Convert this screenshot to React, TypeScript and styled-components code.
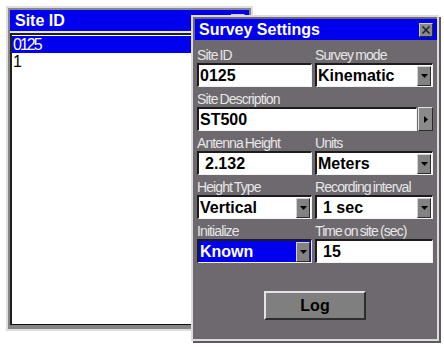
import styled, { createGlobalStyle } from "styled-components";

const GlobalStyle = createGlobalStyle`
  html, body {
    margin: 0;
    padding: 0;
    background: #ffffff;
  }
  * {
    box-sizing: border-box;
  }
`;

const Desktop = styled.div`
  position: relative;
  width: 444px;
  height: 349px;
  overflow: hidden;
  background: #ffffff;
  font-family: "Liberation Sans", Arial, sans-serif;
`;

// back window: the site list
const ListWindow = styled.div`
  position: absolute;
  left: 6px;
  top: 6px;
  width: 247px;
  height: 325px;
  display: flex;
  flex-direction: column;
  border: 2px solid #dedede;
  padding: 2px;
  background: #868686;
`;

const TitleBar = styled.div`
  height: 21px;
  flex: none;
  display: flex;
  align-items: center;
  justify-content: space-between;
  padding: 0 4px 0 4px;
  background: #0000ee;
  color: #ffffff;
  font-weight: bold;
  font-size: 16px;
`;

const ListTitleBar = styled(TitleBar)`
  height: 23px;
  border-bottom: 2px solid #e6e6e6;
  padding-left: 5px;
`;

const CloseBox = styled.div`
  width: 14px;
  height: 14px;
  display: flex;
  align-items: center;
  justify-content: center;
  background: #8a8a8a;
  border: 1px solid;
  border-color: #d0d0d0 #2a2a2a #2a2a2a #d0d0d0;
`;

const List = styled.div`
  flex: 1;
  background: #ffffff;
  border-style: solid;
  border-width: 2px 1px 1px 2px;
  border-color: #1e1e1e #303030 #101010 #1e1e1e;
  margin-bottom: 2px;
  padding-top: 1px;
`;

const ListRow = styled.div<{ $selected?: boolean }>`
  height: 17px;
  line-height: 17px;
  padding-left: 1px;
  font-size: 16px;
  letter-spacing: -2px;
  color: ${(p) => (p.$selected ? "#ffffff" : "#000000")};
  background: ${(p) => (p.$selected ? "#0000ee" : "transparent")};
`;

// front window: the settings dialog
const Dialog = styled.div`
  position: absolute;
  left: 191px;
  top: 15px;
  width: 248px;
  height: 326px;
  display: flex;
  flex-direction: column;
  border: 2px solid #dcdcdc;
  box-shadow: 2px 2px 0 #5c5c5c;
  background: #6d696e;
`;

const DialogTitle = styled(TitleBar)`
  margin: 2px 0 0 2px;
  padding: 0 4px 0 4px;
`;

const Form = styled.div`
  display: grid;
  grid-template-columns: 115px 118px;
  column-gap: 3px;
  row-gap: 4px;
  padding: 7px 0 0 4px;
`;

const Cell = styled.div<{ $wide?: boolean }>`
  display: flex;
  flex-direction: column;
  grid-column: ${(p) => (p.$wide ? "1 / span 2" : "auto")};
`;

const Label = styled.div`
  height: 16px;
  line-height: 16px;
  font-size: 14px;
  letter-spacing: -0.9px;
  word-spacing: -1px;
  color: #e6e6e6;
  white-space: nowrap;
`;

const Control = styled.div<{ $active?: boolean }>`
  height: 24px;
  display: flex;
  align-items: center;
  border-style: solid;
  border-width: 2px 1px 1px 2px;
  border-color: #1c1c1c #f2f2f2 #f2f2f2 #1c1c1c;
  background: ${(p) => (p.$active ? "#0000ee" : "#ffffff")};
  color: ${(p) => (p.$active ? "#ffffff" : "#000000")};
`;

const Value = styled.div<{ $indent?: number }>`
  flex: 1;
  padding-left: ${(p) => p.$indent ?? 1}px;
  font-size: 16px;
  font-weight: bold;
  white-space: nowrap;
  overflow: hidden;
`;

const DropButton = styled.div`
  width: 14px;
  height: 20px;
  margin-right: 1px;
  display: flex;
  align-items: center;
  justify-content: center;
  background: #828282;
  border: 1px solid;
  border-color: #d2d2d2 #2c2c2c #2c2c2c #d2d2d2;
`;

const WideRow = styled.div`
  display: flex;
  gap: 1px;
`;

const SideButton = styled.div`
  width: 15px;
  height: 24px;
  display: flex;
  align-items: center;
  justify-content: center;
  background: #8a8a8a;
  border: 1px solid;
  border-color: #e0e0e0 #2c2c2c #2c2c2c #e0e0e0;
`;

const ButtonRow = styled.div`
  display: flex;
  justify-content: center;
  padding-top: 28px;
`;

const LogButton = styled.div`
  width: 102px;
  height: 29px;
  display: flex;
  align-items: center;
  justify-content: center;
  background: #7f7f7f;
  border: 2px solid;
  border-color: #e4e4e4 #2e2e2e #2e2e2e #e4e4e4;
  font-size: 16px;
  font-weight: bold;
  color: #000000;
`;

const DownArrow = () => (
  <svg width="7" height="4" viewBox="0 0 7 4">
    <path d="M0 0 H7 L3.5 4 Z" fill="#000" />
  </svg>
);

const RightArrow = () => (
  <svg width="4" height="7" viewBox="0 0 4 7">
    <path d="M0 0 V7 L4 3.5 Z" fill="#000" />
  </svg>
);

const CloseX = () => (
  <svg width="10" height="10" viewBox="0 0 10 10">
    <path d="M1.5 1.5 L8.5 8.5 M8.5 1.5 L1.5 8.5" stroke="#222" strokeWidth="1.6" />
  </svg>
);

const Select = ({ value, active, indent }: { value: string; active?: boolean; indent?: number }) => (
  <Control $active={active}>
    <Value $indent={indent}>{value}</Value>
    <DropButton>
      <DownArrow />
    </DropButton>
  </Control>
);

const Input = ({ value, indent }: { value: string; indent?: number }) => (
  <Control>
    <Value $indent={indent}>{value}</Value>
  </Control>
);

export default function App() {
  return (
    <Desktop>
      <GlobalStyle />
      <ListWindow>
        <ListTitleBar>
          <span>Site ID</span>
          <CloseBox>
            <CloseX />
          </CloseBox>
        </ListTitleBar>
        <List>
          <ListRow $selected>0125</ListRow>
          <ListRow>1</ListRow>
        </List>
      </ListWindow>

      <Dialog>
        <DialogTitle>
          <span>Survey Settings</span>
          <CloseBox>
            <CloseX />
          </CloseBox>
        </DialogTitle>
        <Form>
          <Cell>
            <Label>Site ID</Label>
            <Input value="0125" />
          </Cell>
          <Cell>
            <Label>Survey mode</Label>
            <Select value="Kinematic" />
          </Cell>
          <Cell $wide>
            <Label>Site Description</Label>
            <WideRow>
              <div style={{ flex: 1 }}>
                <Input value="ST500" />
              </div>
              <SideButton>
                <RightArrow />
              </SideButton>
            </WideRow>
          </Cell>
          <Cell>
            <Label>Antenna Height</Label>
            <Input value="2.132" indent={6} />
          </Cell>
          <Cell>
            <Label>Units</Label>
            <Select value="Meters" />
          </Cell>
          <Cell>
            <Label>Height Type</Label>
            <Select value="Vertical" />
          </Cell>
          <Cell>
            <Label>Recording interval</Label>
            <Select value="1 sec" indent={6} />
          </Cell>
          <Cell>
            <Label>Initialize</Label>
            <Select value="Known" active />
          </Cell>
          <Cell>
            <Label>Time on site (sec)</Label>
            <Input value="15" indent={6} />
          </Cell>
        </Form>
        <ButtonRow>
          <LogButton>Log</LogButton>
        </ButtonRow>
      </Dialog>
    </Desktop>
  );
}
